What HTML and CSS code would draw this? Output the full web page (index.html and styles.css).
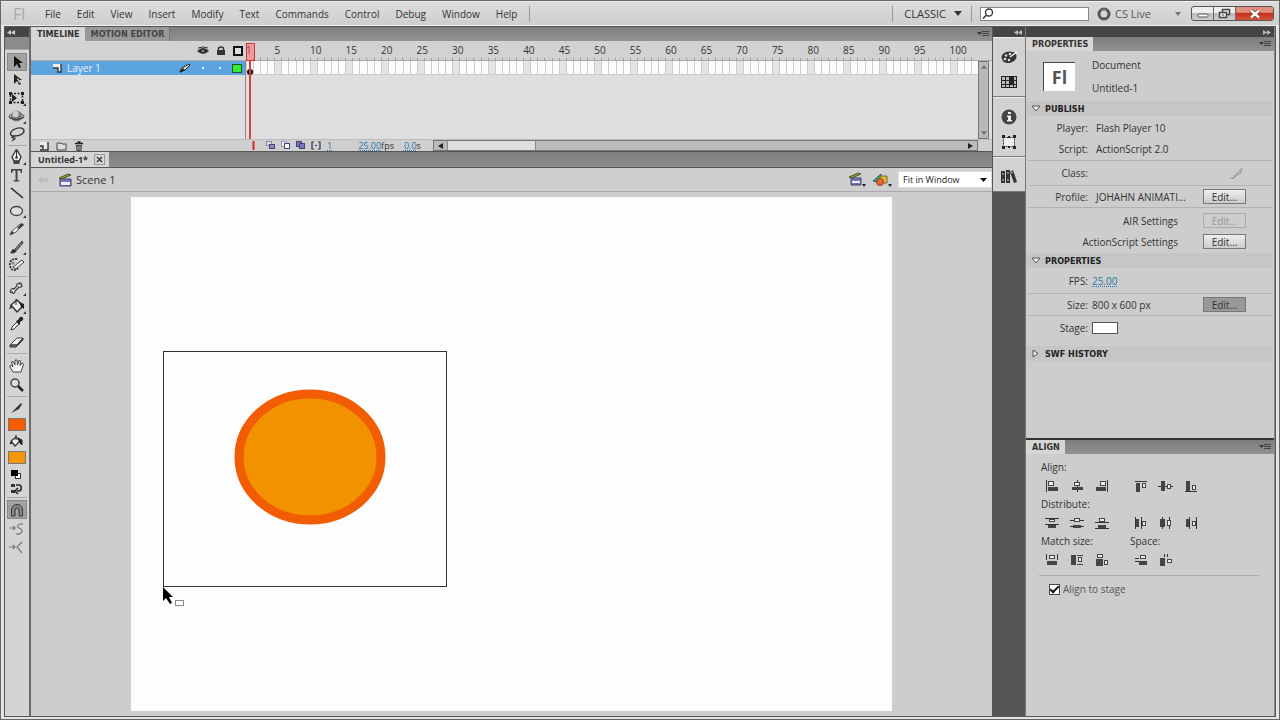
FILE: index.html
```html
<!DOCTYPE html>
<html lang="en">
<head>
<meta charset="utf-8">
<title>Untitled-1</title>
<link rel="stylesheet" href="styles.css">
</head>
<body>
<div class="window">
  <header class="menubar">
    <span class="logo">Fl</span>
    <nav class="menus">
      <button>File</button><button>Edit</button><button>View</button><button>Insert</button><button>Modify</button><button>Text</button><button>Commands</button><button>Control</button><button>Debug</button><button>Window</button><button>Help</button>
    </nav>
    <i class="bar-line"></i>
    <span class="grow"></span>
    <i class="bar-line"></i>
    <button class="workspace">CLASSIC <svg width="8" height="5"><path d="M0 0h8L4 5z" fill="#333"/></svg></button>
    <i class="bar-line"></i>
    <label class="search"><svg width="12" height="12"><circle cx="7" cy="4.500" r="3.500" fill="none" stroke="#333" stroke-width="1.300"/><path d="M4.500 7L1 10.500" stroke="#333" stroke-width="1.600"/></svg><input type="text" aria-label="Search"></label>
    <button class="live"><svg width="14" height="14"><circle cx="7" cy="7" r="5" fill="none" stroke="#555" stroke-width="3"/><path d="M4 4a4 4 0 0 1 5-1" fill="none" stroke="#999"/></svg> CS Live <svg class="live-arrow" width="6" height="4"><path d="M0 0h6L3 4z" fill="#777"/></svg></button>
    <div class="winbuttons">
      <button aria-label="Minimize"><svg width="12" height="10"><rect x="1" y="5" width="10" height="3" rx="1" fill="#fff" stroke="#555"/></svg></button>
      <button aria-label="Restore"><svg width="13" height="12"><rect x="4.500" y="1.500" width="7" height="5" fill="#eee" stroke="#444" stroke-width="1.500"/><rect x="1.500" y="4.500" width="7" height="5" fill="#eee" stroke="#444" stroke-width="1.500"/><path d="M4 7h2" stroke="#444"/></svg></button>
      <button class="close" aria-label="Close"><svg width="12" height="10"><path d="M2 1.500l8 7M10 1.500l-8 7" stroke="#733" stroke-width="4"/><path d="M2 1.500l8 7M10 1.500l-8 7" stroke="#fff" stroke-width="2.400"/></svg></button>
    </div>
  </header>

  <div class="workarea">
    <aside class="tools">
      <div class="dockhead left"><svg width="8" height="5"><path d="M4 0v5L0 2.500zM8 0v5L4 2.500z" fill="#ccc"/></svg></div>
      <div class="toolgrip"></div>
      <div class="toolset">
        <button class="on" aria-label="Selection"><svg width="18" height="16"><path d="M6 2v11l3-3 2 4 2-1-2-4h4z" fill="#111"/></svg></button>
        <button aria-label="Subselection"><svg width="18" height="16"><path d="M6 2v10l3-3 2 4 2-1-2-4h3z" fill="#222"/><path d="M9 7l1 0 1.500 4" stroke="#eee" fill="none"/></svg></button>
        <button aria-label="Free Transform"><svg width="18" height="16"><rect x="2.500" y="3.500" width="12" height="9" fill="none" stroke="#222" stroke-width="1.500" stroke-dasharray="2 1.500"/><path d="M1 2h3v3H1zM13 2h3v3h-3zM1 11h3v3H1zM13 11h3v3h-3zM4 4v8l5-4z" fill="#222"/><path d="M18 13v3h-3z" fill="#333"/></svg></button>
        <button aria-label="3D Rotation"><svg width="18" height="16"><ellipse cx="8.500" cy="8.500" rx="7.500" ry="3" fill="#ccc" stroke="#444"/><circle cx="8.500" cy="8" r="5.500" fill="#777"/><circle cx="7.500" cy="6" r="3.200" fill="#ccc"/><path d="M1 9q7.500 5 15 0" fill="none" stroke="#333"/><path d="M18 13v3h-3z" fill="#333"/></svg></button>
        <button aria-label="Lasso"><svg width="18" height="16"><path d="M5 10C1 9 2 5 7 3s9-1 9 2-5 5-9 5-4 2-1 2-1 2-2 3" fill="none" stroke="#333" stroke-width="1.300"/></svg></button>
        <hr>
        <button aria-label="Pen"><svg width="18" height="16"><path d="M8 1l-4 7 2 4h5l2-4-4-7z" fill="#eee" stroke="#333" stroke-width="1.300"/><path d="M8.500 2v6" stroke="#333"/><circle cx="8.500" cy="8.500" r="1.300" fill="#333"/><path d="M5.500 12h6v3h-6z" fill="#444"/><path d="M18 13v3h-3z" fill="#333"/></svg></button>
        <button aria-label="Text"><svg width="18" height="16"><path d="M3 2h11v4h-1l-1-2.500H9.500V13l2 .500v1h-6v-1l2-.500V3.500H5L4 6H3z" fill="#444"/></svg></button>
        <button aria-label="Line"><svg width="18" height="16"><path d="M3 3l12 10" stroke="#222" stroke-width="1.500"/></svg></button>
        <button aria-label="Oval"><svg width="18" height="16"><ellipse cx="8.500" cy="8" rx="6" ry="4.500" fill="#ddd" stroke="#444" stroke-width="1.300"/><path d="M18 12v3h-3z" fill="#333"/></svg></button>
        <button aria-label="Pencil"><svg width="18" height="16"><path d="M2 14l2-4 8-7 3 1-7 7z" fill="#eee" stroke="#555"/><path d="M2 14l2-4 2 2zM9 7l5-5 2 2-6 4z" fill="#333"/></svg></button>
        <button aria-label="Brush"><svg width="18" height="16"><path d="M2 14c2-1 1-4 4-4l3 2c-2 2-4 3-7 2z" fill="#333"/><path d="M7 10l7-8 1 2-6 7z" fill="#777" stroke="#444"/><path d="M18 13v3h-3z" fill="#333"/></svg></button>
        <button aria-label="Deco"><svg width="18" height="16"><path d="M9 2C4 1 1 5 2 9s5 6 8 2" fill="none" stroke="#333" stroke-width="1.800" stroke-dasharray="2 1"/><path d="M5 10l9-7 2 2-8 7z" fill="#eee" stroke="#444"/><circle cx="5" cy="6" r="1.500" fill="#888"/></svg></button>
        <hr>
        <button aria-label="Bone"><svg width="18" height="16"><path d="M3 10c-2 2 0 3 1 2 0 2 3 2 3-1l4-4c3 1 4-2 2-2 1-2-1-3-2-1-1-1-3 0-2 2L6 9c-1-1-3 0-3 1z" fill="#eee" stroke="#333" stroke-width="1.200"/><path d="M18 13v3h-3z" fill="#333"/></svg></button>
        <button aria-label="Paint Bucket"><svg width="18" height="16"><path d="M3 7l6-5 6 6-6 6z" fill="#eee" stroke="#333" stroke-width="1.500"/><path d="M3 7L1 11l3-1zM11 4l5 2v5l-3-2z" fill="#222"/><path d="M8 1v6" stroke="#333"/><path d="M18 13v3h-3z" fill="#333"/></svg></button>
        <button aria-label="Eyedropper"><svg width="18" height="16"><path d="M3 14l1-3 5-5 2 2-5 5z" fill="#eee" stroke="#333"/><path d="M8 5l2-1 2-3c2-1 4 1 3 3l-3 2v3z" fill="#222"/></svg></button>
        <button aria-label="Eraser"><svg width="18" height="16"><path d="M2 11l7-7h6l-6 7z" fill="#eee" stroke="#444"/><path d="M2 11v2h6l7-7V4l-6 7z" fill="#777" stroke="#333"/></svg></button>
        <hr>
        <div class="tall">
        <button aria-label="Hand"><svg width="18" height="16"><path d="M5 14L1.500 8l2-.500L5 9 3.500 4l1.500-.500L7 7V2h2l.500 5L11 2.500l1.500.500-.500 4.500L14 5l1.500 1L13 14z" fill="#f4f4f4" stroke="#444"/></svg></button>
        <button aria-label="Zoom"><svg width="18" height="16"><circle cx="7" cy="6" r="4" fill="#ddd" stroke="#444" stroke-width="1.500"/><path d="M10 9l5 5" stroke="#222" stroke-width="2.500"/></svg></button>
        </div>
        <hr>
        <button aria-label="Stroke color tool"><svg width="18" height="16"><path d="M3 13l6-6 2 2zM9 7l4-4 1 1-3 5z" fill="#333"/></svg></button>
        <button class="swatch stroke" aria-label="Stroke color"></button>
        <button aria-label="Fill color tool"><svg width="18" height="16"><path d="M3 8l5-4 4 4-5 5z" fill="#eee" stroke="#333" stroke-width="1.300"/><path d="M8 2v5M10 5l4 2v5l-3-3M3 9L2 11l2-1z" fill="#222" stroke="#222"/></svg></button>
        <button class="swatch fill" aria-label="Fill color"></button>
        <div class="short">
        <button aria-label="Black and white"><svg width="18" height="13"><rect x="7.500" y="5.500" width="5" height="5" fill="#fff" stroke="#333"/><path d="M3 2h7v6H3z" fill="#000"/></svg></button>
        <button aria-label="Swap colors"><svg width="18" height="13"><path d="M3 2h4v3H3zM3 8h4v3H3z" fill="#333"/><path d="M8 3h3c3 0 3 6 0 6H9M10 6L7 9l3 3" fill="none" stroke="#222" stroke-width="1.500"/></svg></button>
        </div>
        <hr>
        <div class="tall">
        <button class="on" aria-label="Snap to Objects"><svg width="18" height="16"><path d="M3.500 14V8a5.500 5.500 0 0 1 11 0v6h-3.500V8a2 2 0 0 0-4 0v6z" fill="#888" stroke="#333"/></svg></button>
        <button aria-label="Smooth"><svg width="18" height="16"><path d="M1 7h6M5 5l2 2-2 2M15 3c-5-1-7 3-4 4s4 3 2 5-4 1-5 1" fill="none" stroke="#777" stroke-width="1.200"/></svg></button>
        <button aria-label="Straighten"><svg width="18" height="16"><path d="M1 7h6M5 5l2 2-2 2M14 2l-5 5 5 6" fill="none" stroke="#777" stroke-width="1.200"/></svg></button>
        </div>
      </div>
    </aside>

    <main class="center">
      <section class="timeline">
        <div class="tabs">
          <button class="tab active">TIMELINE</button><button class="tab dim">MOTION EDITOR</button>
          <span class="grow"></span>
          <button class="panelmenu" aria-label="Timeline menu"><svg width="13" height="8"><path d="M0 2h5L2.500 5z" fill="#333"/><path d="M5 1.500h7M5 3.500h7M5 5.500h7" stroke="#444"/></svg></button>
        </div>
        <div class="tlhead">
          <div class="layercols">
            <svg width="12" height="10"><path d="M0 5q6-6 12 0-6 6-12 0z" fill="#333"/><path d="M1 2q5-2 10 0" stroke="#333" fill="none"/><circle cx="6" cy="5" r="1" fill="#aaa"/></svg>
            <svg width="10" height="10"><path d="M1 4h8v5H1z" fill="#333"/><path d="M2.500 5V3a2.500 2 0 0 1 5 0v2" fill="none" stroke="#333" stroke-width="1.500"/></svg>
            <svg width="10" height="10"><rect x="1" y="1" width="8" height="8" fill="#ddd" stroke="#111" stroke-width="2"/></svg>
          </div>
          <div class="ruler framegrid">
            <span>1</span><span>5</span><span>10</span><span>15</span><span>20</span><span>25</span><span>30</span><span>35</span><span>40</span><span>45</span><span>50</span><span>55</span><span>60</span><span>65</span><span>70</span><span>75</span><span>80</span><span>85</span><span>90</span><span>95</span><span>100</span>
          </div>
        </div>
        <div class="tlbody">
          <div class="layers">
            <div class="layer">
              <svg width="10" height="10"><path d="M1 1h8v8H6V5H1z" fill="#eee"/><path d="M1 5h5v4M9 1v8H5" fill="none" stroke="#333" stroke-width="1.300"/></svg>
              <span class="name">Layer 1</span>
              <svg width="12" height="10"><path d="M1 9l2-4 7-4 1 1-5 5z" fill="#ddd" stroke="#222"/><path d="M1 9l4-3" stroke="#222" stroke-width="2"/></svg>
              <i class="dot"></i><i class="dot"></i><i class="outline"></i>
            </div>
          </div>
          <div class="frames">
            <div class="strip framegrid"><i></i><i></i><i></i><i></i><i></i><i></i><i></i><i></i><i></i><i></i><i></i><i></i><i></i><i></i><i></i><i></i><i></i><i></i><i></i><i></i><i></i></div>
            <svg class="playhead" width="9" height="96"><rect x=".500" y=".500" width="8" height="17" fill="#f66" fill-opacity=".500" stroke="#c33"/><circle cx="4" cy="29" r="3" fill="#111"/><rect x="3" y="18" width="2" height="78" fill="#d84040"/></svg>
          </div>
          <div class="vscroll"><svg width="6" height="4"><path d="M0 4l3-4 3 4z" fill="#777"/></svg><svg width="6" height="4"><path d="M0 0l3 4 3-4z" fill="#777"/></svg></div>
        </div>
        <div class="tlfoot">
          <div class="layerbuttons">
            <button aria-label="New Layer"><svg width="10" height="10"><path d="M1 1h8v8H4V5H1z" fill="#eee"/><path d="M9 1v8H1M1 5h3v3" fill="none" stroke="#333" stroke-width="1.400"/></svg></button>
            <button aria-label="New Folder"><svg width="11" height="10"><path d="M1 2h4l1 1h4v6H1z" fill="#ddd" stroke="#444"/></svg></button>
            <button aria-label="Delete"><svg width="10" height="10"><path d="M1 2.500h8M3.500 1h3" stroke="#222" stroke-width="1.500"/><path d="M2 4h6l-.500 6h-5z" fill="#444"/><path d="M4 5v4M6 5v4" stroke="#bbb"/></svg></button>
          </div>
          <div class="onion">
            <button aria-label="Center Frame"><svg width="3" height="9"><path d="M1.500 0v9" stroke="#d22" stroke-width="2"/></svg></button>
            <button aria-label="Onion Skin"><svg width="10" height="9"><rect x=".500" y=".500" width="5" height="4" fill="#ddd" stroke="#88a"/><rect x="3.500" y="3.500" width="5" height="4" fill="#88b" stroke="#447"/></svg></button>
            <button aria-label="Onion Skin Outlines"><svg width="10" height="9"><rect x=".500" y=".500" width="5" height="5" fill="#eee" stroke="#99a"/><rect x="3.500" y="2.500" width="5" height="5" fill="#fff" stroke="#447"/></svg></button>
            <button aria-label="Edit Multiple Frames"><svg width="10" height="9"><rect x=".500" y=".500" width="5" height="5" fill="#77b" stroke="#447"/><rect x="3.500" y="2.500" width="5" height="5" fill="#77b" stroke="#447"/></svg></button>
            <button aria-label="Modify Markers"><svg width="10" height="9"><path d="M3 1H1v7h2M7 1h2v7H7M4 4.500h2" fill="none" stroke="#335" stroke-width="1.200"/></svg></button>
          </div>
          <a class="hot curframe" href="#">1</a>
          <span class="fps"><a class="hot" href="#">25.00</a>fps</span>
          <span class="secs"><a class="hot" href="#">0.0</a>s</span>
          <div class="hscroll"><svg width="5" height="6"><path d="M5 0v6L0 3z" fill="#222"/></svg><i class="thumb"></i><svg width="5" height="6"><path d="M0 0v6l5-3z" fill="#222"/></svg></div>
        </div>
      </section>

      <div class="doctabs"><div class="doctab">Untitled-1* <button aria-label="Close document"><svg width="9" height="9"><path d="M2 2l5 5M7 2L2 7" stroke="#333" stroke-width="1.300"/></svg></button></div></div>

      <div class="editbar">
        <svg width="10" height="8"><path d="M4 0v2.500h6v3H4V8L0 4z" fill="#bbb"/></svg>
        <svg class="clap" width="16" height="14"><path d="M2 6h11v7H2z" fill="#77b" stroke="#446"/><path d="M3 9h9v3H3z" fill="#eef"/><path d="M1 5l9-4 3 1-9 4z" fill="#992" stroke="#553"/></svg>
        <span class="scene">Scene 1</span>
        <span class="grow"></span>
        <button aria-label="Edit Scene"><svg width="18" height="15"><path d="M3 6h10v7H3z" fill="#77b" stroke="#446"/><path d="M4 9h8v2H4z" fill="#eef"/><path d="M1 5l9-4 3 1-9 4z" fill="#992" stroke="#553"/><path d="M14 12h4l-2 3z" fill="#222"/></svg></button>
        <button aria-label="Edit Symbols"><svg width="20" height="15"><path d="M1 9l8-7v9z" fill="#2a8" stroke="#265"/><path d="M8 4h7v7H8z" fill="#db2" stroke="#763"/><circle cx="8" cy="10" r="3.500" fill="#e63" stroke="#933"/><path d="M16 12h4l-2 3z" fill="#222"/></svg></button>
        <div class="zoom"><select aria-label="Zoom level"><option>Fit in Window</option></select><svg width="7" height="4"><path d="M0 0h7L3.500 4z" fill="#111"/></svg></div>
      </div>

      <div class="pasteboard">
        <div class="stage">
          <svg class="oval" width="152" height="136" viewBox="0 0 152 136"><ellipse cx="76" cy="68" rx="71" ry="63" fill="#f29200" stroke="#f25c02" stroke-width="9"/></svg>
          <div class="marquee"></div>
          <svg class="pointer" width="22" height="21"><path d="M0 0v14l3-3 4 6 2-1-3-6h4z" fill="#000"/><rect x="12.500" y="13.500" width="8" height="5" fill="#fff" stroke="#888"/></svg>
        </div>
      </div>
    </main>

    <aside class="icondock">
      <div class="dockhead"><svg width="8" height="5"><path d="M4 0v5L0 2.500zM8 0v5L4 2.500z" fill="#bbb"/></svg></div>
      <div class="icongroup">
        <button aria-label="Color"><svg width="18" height="16"><path d="M2 10C0 5 7 1 13 3c4 1 5 6 1 9-4 3-11 3-12-2z" fill="#333"/><circle cx="6" cy="6.500" r="1.300" fill="#ddd"/><circle cx="10" cy="5" r="1.300" fill="#ddd"/><circle cx="5" cy="10" r="1.300" fill="#ddd"/><circle cx="9" cy="11" r="1.300" fill="#ddd"/><path d="M10 8l7-5" stroke="#eee" stroke-width="1.500"/></svg></button>
        <button aria-label="Swatches"><svg width="18" height="16"><path d="M1 2h16v12H1z" fill="#222"/><path d="M2 3h3v3H2zM6 3h3v3H6zM2 7h3v3H2zM6 7h3v3H6zM14 3h2v3h-2zM2 11h3v2H2zM6 11h3v2H6zM10 11h3v2h-3zM14 11h2v2h-2zM14 7h2v3h-2z" fill="#bbb"/></svg></button>
      </div>
      <div class="icongroup">
        <button aria-label="Info"><svg width="18" height="16"><circle cx="9" cy="8" r="7.500" fill="#444"/><path d="M8 3h3v2H8zM7 6.500h4V11h1v1.500H7V11h1V8H7z" fill="#eee"/></svg></button>
        <button aria-label="Transform"><svg width="18" height="16"><rect x="3.500" y="3.500" width="11" height="9" fill="#eee" stroke="#333" stroke-dasharray="2 1"/><path d="M2 1h3v3H2zM13 1h3v3h-3zM2 12h3v3H2zM13 12h3v3h-3zM8 2h2v2H8zM8 12h2v2H8z" fill="#222"/></svg></button>
      </div>
      <div class="icongroup">
        <button aria-label="Library"><svg width="18" height="16"><path d="M1 2h4v12H1zM6 1h4v13H6z" fill="#333"/><path d="M10 3l3-2 4 12-3 1z" fill="#333"/><path d="M2 5h2M7 4h2M2 11h2M7 11h2M11 4l2-1" stroke="#ccc"/></svg></button>
      </div>
    </aside>

    <aside class="panels">
      <div class="dockhead right"><svg width="8" height="5"><path d="M0 0v5l4-2.500zM4 0v5l4-2.500z" fill="#bbb"/></svg></div>
      <section class="panel props">
        <div class="tabs"><button class="tab active">PROPERTIES</button><span class="grow"></span><button class="panelmenu" aria-label="Properties menu"><svg width="13" height="8"><path d="M0 2h5L2.500 5z" fill="#333"/><path d="M5 1.500h7M5 3.500h7M5 5.500h7" stroke="#444"/></svg></button></div>
        <div class="docinfo"><span class="doclogo">Fl</span><div><p>Document</p><p>Untitled-1</p></div></div>
        <h2><svg width="10" height="7"><path d="M1 1h8L5 6z" fill="#eee" stroke="#555"/></svg>PUBLISH</h2>
        <div class="block">
          <div class="row"><span class="key">Player:</span><span class="val">Flash Player 10</span></div>
          <div class="row"><span class="key">Script:</span><span class="val">ActionScript 2.0</span></div>
        </div>
        <div class="block lined"><div class="row"><span class="key">Class:</span><span class="grow"></span><svg class="pencil" width="16" height="14"><path d="M2 12h3l5-6 4-4-1 5-4 2-4 4" fill="#bbb" stroke="#999"/></svg></div></div>
        <div class="block flush"><div class="row"><span class="key">Profile:</span><span class="val">JOHAHN ANIMATI...</span><button class="edit">Edit...</button></div></div>
        <div class="block ruled">
          <div class="row"><span class="wide">AIR Settings</span><button class="edit" disabled>Edit...</button></div>
          <div class="row"><span class="wide">ActionScript Settings</span><button class="edit">Edit...</button></div>
        </div>
        <h2><svg width="10" height="7"><path d="M1 1h8L5 6z" fill="#eee" stroke="#555"/></svg>PROPERTIES</h2>
        <div class="block lined near first"><div class="row"><span class="key">FPS:</span><a class="hot" href="#">25.00</a></div></div>
        <div class="block near flush"><div class="row"><span class="key">Size:</span><span class="val">800 x 600 px</span><button class="edit pressed">Edit...</button></div></div>
        <div class="block lined near last"><div class="row"><span class="key">Stage:</span><button class="stagecolor" aria-label="Stage color"></button></div></div>
        <h2><svg width="10" height="9"><path d="M2 1v7l5-3.500z" fill="#eee" stroke="#555"/></svg>SWF HISTORY</h2>
      </section>
      <section class="panel align">
        <div class="tabs"><button class="tab active">ALIGN</button><span class="grow"></span><button class="panelmenu" aria-label="Align menu"><svg width="13" height="8"><path d="M0 2h5L2.500 5z" fill="#333"/><path d="M5 1.500h7M5 3.500h7M5 5.500h7" stroke="#444"/></svg></button></div>
        <div class="alignbody">
          <div class="pair"><span>Align:</span></div>
          <div class="pair icons">
            <div>
              <button aria-label="Align left"><svg width="14" height="12"><path d="M1.500 0v12" stroke="#333"/><rect x="3.500" y="1.500" width="5" height="4" fill="#eee" stroke="#444"/><path d="M3 7h10v4H3z" fill="#444"/></svg></button>
              <button aria-label="Align center"><svg width="14" height="12"><path d="M7.500 0v12" stroke="#333"/><rect x="4.500" y="2.500" width="5" height="3" fill="#eee" stroke="#444"/><path d="M2 7h11v3H2z" fill="#444"/></svg></button>
              <button aria-label="Align right"><svg width="14" height="12"><path d="M12.500 0v12" stroke="#333"/><rect x="5.500" y="1.500" width="5" height="4" fill="#eee" stroke="#444"/><path d="M1 7h10v4H1z" fill="#444"/></svg></button>
            </div>
            <div>
              <button aria-label="Align top"><svg width="14" height="12"><path d="M1 1.500h12" stroke="#333"/><path d="M2 3h4v9H2z" fill="#444"/><rect x="8.500" y="3.500" width="3" height="4" fill="#eee" stroke="#444"/></svg></button>
              <button aria-label="Align middle"><svg width="15" height="12"><path d="M0 6.500h15" stroke="#333"/><path d="M3 1h4v10H3z" fill="#444"/><rect x="9.500" y="4.500" width="3" height="4" fill="#eee" stroke="#444"/></svg></button>
              <button aria-label="Align bottom"><svg width="14" height="12"><path d="M1 11.500h12" stroke="#333"/><path d="M2 1h4v10H2z" fill="#444"/><rect x="8.500" y="5.500" width="3" height="4" fill="#eee" stroke="#444"/></svg></button>
            </div>
          </div>
          <div class="pair"><span>Distribute:</span></div>
          <div class="pair icons">
            <div>
              <button aria-label="Distribute top"><svg width="14" height="12"><path d="M0 1.500h14M0 7.500h14" stroke="#333"/><rect x="4.500" y="2.500" width="5" height="2" fill="#eee" stroke="#444"/><path d="M3 8h8v3H3z" fill="#444"/></svg></button>
              <button aria-label="Distribute vertical center"><svg width="14" height="12"><path d="M0 3.500h14M0 9.500h14" stroke="#333"/><rect x="4.500" y="1.500" width="5" height="3" fill="#eee" stroke="#444"/><path d="M3 8h8v3H3z" fill="#444"/></svg></button>
              <button aria-label="Distribute bottom"><svg width="14" height="12"><path d="M0 5.500h14M0 11.500h14" stroke="#333"/><rect x="4.500" y="1.500" width="5" height="3" fill="#eee" stroke="#444"/><path d="M3 8h8v3H3z" fill="#444"/></svg></button>
            </div>
            <div>
              <button aria-label="Distribute left"><svg width="14" height="12"><path d="M1.500 0v12M7.500 0v12" stroke="#333"/><path d="M2 2h3v8H2z" fill="#444"/><rect x="8.500" y="4.500" width="3" height="4" fill="#eee" stroke="#444"/></svg></button>
              <button aria-label="Distribute horizontal center"><svg width="14" height="12"><path d="M3.500 0v12M10.500 0v12" stroke="#333"/><path d="M1 2h5v8H1z" fill="#444"/><rect x="8.500" y="3.500" width="3" height="5" fill="#eee" stroke="#444"/></svg></button>
              <button aria-label="Distribute right"><svg width="14" height="12"><path d="M5.500 0v12M12.500 0v12" stroke="#333"/><path d="M2 2h3v8H2z" fill="#444"/><rect x="8.500" y="4.500" width="3" height="4" fill="#eee" stroke="#444"/></svg></button>
            </div>
          </div>
          <div class="pair"><span>Match size:</span><span>Space:</span></div>
          <div class="pair icons">
            <div>
              <button aria-label="Match width"><svg width="14" height="12"><path d="M1.500 0v6M12.500 0v6" stroke="#333"/><rect x="4.500" y="1.500" width="5" height="3" fill="#eee" stroke="#444"/><path d="M2 7h10v4H2z" fill="#444"/></svg></button>
              <button aria-label="Match height"><svg width="14" height="12"><path d="M1 1h5v10H1zM7 1h6v1H7zM7 10h6v1H7z" fill="#444"/><rect x="8.500" y="3.500" width="3" height="4" fill="#eee" stroke="#444"/></svg></button>
              <button aria-label="Match width and height"><svg width="14" height="12"><rect x="2.500" y=".500" width="5" height="3" fill="#eee" stroke="#444"/><path d="M1 5h7v7H1z" fill="#444"/><rect x="9.500" y="6.500" width="3" height="4" fill="#eee" stroke="#444"/></svg></button>
            </div>
            <div>
              <button aria-label="Space vertically"><svg width="14" height="12"><path d="M1 4.500h4M1 7.500h4" stroke="#333"/><rect x="6.500" y="1.500" width="5" height="3" fill="#eee" stroke="#444"/><path d="M5 7h8v4H5z" fill="#444"/></svg></button>
              <button aria-label="Space horizontally"><svg width="14" height="12"><path d="M5.500 0v3M8.500 0v3" stroke="#333"/><path d="M1 4h5v8H1z" fill="#444"/><rect x="8.500" y="5.500" width="4" height="3" fill="#eee" stroke="#444"/></svg></button>
            </div>
          </div>
          <label class="tostage"><input type="checkbox" checked>Align to stage</label>
        </div>
      </section>
    </aside>
  </div>
</div>
</body>
</html>
```
FILE: styles.css
```css
* { box-sizing: border-box; }
body { margin: 0; font: 10px/14px "Open Sans", "Noto Sans", sans-serif; color: #333; background: #555; }
button { margin: 0; padding: 0; border: 0; background: none; color: inherit; font: inherit; display: flex; align-items: center; justify-content: center; }
svg { display: block; flex: none; }
p, h2 { margin: 0; }
.grow { flex: 1; }

.window { display: flex; flex-direction: column; min-height: 100vh; background: #e4e4e4; border: 1px solid #666; padding: 0 3px 2px; }
.menubar { display: flex; align-items: center; height: 25px; margin: 0 -3px; padding-right: 5px; background: linear-gradient(#dcdcdc, #cfcfcf); border-top: 1px solid #eee; border-bottom: 1px solid #eee; }
.logo { width: 36px; padding-left: 12px; font-size: 16px; color: #aaa; }
.menus { display: flex; gap: 16px; padding: 0 12px 0 8px; }
.bar-line { width: 1px; height: 16px; background: #999; }
.workspace { gap: 8px; margin: 0 9px 0 11px; font-size: 11px; }
.search { display: flex; align-items: center; width: 109px; height: 14px; margin: 0 8px; padding-left: 1px; background: #fff; border: 1px solid #888; }
.search input { width: 90px; height: 12px; padding: 0 3px; border: 0; outline: 0; background: none; font: inherit; }
.live { gap: 4px; margin-right: 10px; font-size: 11px; color: #555; }
.live-arrow { margin-left: 20px; }
.winbuttons { display: flex; height: 15px; border: 1px solid #555; border-radius: 3px; overflow: hidden; background: linear-gradient(#eee 45%, #bbb 50%, #ccc); }
.winbuttons button { width: 22px; border-right: 1px solid #666; }
.winbuttons .close { width: 37px; border: 0; background: linear-gradient(#e0907c 40%, #c63220 50%, #d85638); }

.workarea { flex: 1; display: grid; grid-template-columns: 26px 1fr 33px 249px; border: 1px solid #555; background: #cdcdcd; }
.dockhead { height: 10px; display: flex; align-items: center; justify-content: flex-end; padding-right: 3px; background: #454545; }
.dockhead.left { justify-content: flex-start; padding-left: 2px; }

.tools { border-right: 2px solid #6a6a6a; background: #d4d4d4; }
.toolgrip { height: 13px; background: #8b8b8b; border-bottom: 1px solid #aaa; }
.toolset { padding: 3px 2px 0; }
.toolset button { width: 20px; height: 18px; }
.toolset hr { height: 1px; margin: 2px 0 2px; border: 0; background: #aaa; }
.toolset .tall button { height: 19px; }
.toolset .short { padding-top: 2px; }
.toolset .short button { height: 14px; }
.toolset button.on { background: #a2a2a2; border: 1px solid #888; }
.toolset button.swatch { width: 18px; height: 13px; margin: 1px; border: 1px solid #777; }
.toolset .stroke { background: #f55c00; }
.toolset .fill { background: #f59600; }

.center { display: flex; flex-direction: column; min-width: 0; border-right: 1px solid #555; }
.tabs { display: flex; height: 14px; background: linear-gradient(#7d7d7d, #929292); }
.tab { padding: 0 5px 0 6px; font: bold 9px/14px "DejaVu Sans Condensed", "DejaVu Sans", sans-serif; }
.tab.active { background: #d6d6d6; }
.tab.dim { border-right: 1px solid #777; background: #999; color: #444; }
.panelmenu { width: 18px; }
.tlhead { display: flex; height: 20px; background: #d2d2d2; border-bottom: 1px solid #aaa; }
.layercols { display: flex; align-items: center; justify-content: flex-end; gap: 7px; width: 215px; padding-right: 3px; }
.framegrid { display: grid; grid-template-columns: 4fr repeat(19, 5fr) 4fr; }
.ruler { flex: 1; margin-right: 14px; }
.ruler span { min-width: 0; line-height: 18px; background: repeating-linear-gradient(90deg, #999 0 1px, transparent 1px 20%) bottom / 100% 2px no-repeat; }
.ruler span:first-child, .ruler span:last-child { background-image: repeating-linear-gradient(90deg, #999 0 1px, transparent 1px 25%); }
.tlbody { display: flex; height: 78px; background: #dedede; }
.layers { width: 215px; border-right: 1px solid #888; }
.layer { display: flex; align-items: center; height: 14px; padding: 0 3px 0 21px; background: #5ba4e0; color: #eef; }
.layer .name { flex: 1; padding-left: 5px; }
.layer .dot { width: 2px; height: 2px; margin-left: 11px; background: #eef; }
.layer .dot + .dot { margin-left: 15px; }
.layer .outline { width: 10px; height: 9px; margin-left: 11px; background: #3e3; border: 1px solid #252; }
.frames { position: relative; flex: 1; }
.strip { height: 14px; border-bottom: 1px solid #ccc; }
.strip i { background: repeating-linear-gradient(90deg, #ccc 0 1px, transparent 1px 20%), linear-gradient(90deg, #e4e4e4 20%, #fcfcfc 20%); }
.strip i:first-child { background: repeating-linear-gradient(90deg, #ccc 0 1px, #fcfcfc 1px 25%); }
.strip i:last-child { background: repeating-linear-gradient(90deg, #ccc 0 1px, transparent 1px 25%), linear-gradient(90deg, #e4e4e4 25%, #fcfcfc 25%); }
.playhead { position: absolute; left: 0; top: -18px; }
.vscroll { display: flex; flex-direction: column; align-items: center; justify-content: space-between; width: 11px; margin-right: 3px; padding: 3px 0; background: #b8b8b8; border: 1px solid #777; }
.tlfoot { display: flex; align-items: center; height: 12px; background: #cfcfcf; border-top: 1px solid #bbb; font-size: 9px; line-height: 11px; }
.layerbuttons { display: flex; gap: 7px; width: 215px; padding-left: 8px; }
.onion { display: flex; align-items: center; gap: 5px; padding-left: 6px; }
.onion button:first-child { margin-right: 6px; }
.hot { color: #2877ac; text-decoration: underline dotted; }
.curframe { padding-left: 6px; }
.fps { padding-left: 26px; }
.secs { padding-left: 10px; }
.hscroll { display: flex; align-items: center; flex: 1; height: 11px; margin: 0 14px 0 12px; padding: 0 4px; background: #bbb; border: 1px solid #777; }
.thumb { width: 89px; height: 9px; margin: 0 auto 0 4px; background: #dedede; border: solid #888; border-width: 0 1px; }

.doctabs { height: 17px; border-top: 1px solid #555; border-bottom: 1px solid #555; background: linear-gradient(#7d7d7d, #8d8d8d); display: flex; }
.doctab { display: flex; align-items: center; gap: 6px; padding: 0 4px 0 7px; background: #d6d6d6; font-size: 9px; font-weight: bold; }
.doctab button { border: 1px solid #999; }
.editbar { display: flex; align-items: center; height: 24px; padding-left: 7px; border-bottom: 1px solid #aaa; background: #cfcfcf; }
.clap { margin: 0 2px 0 10px; }
.scene { font-size: 11px; }
.editbar button { margin-right: 6px; }
.zoom { position: relative; width: 94px; height: 17px; background: #fff; border: 1px solid #ddd; }
.zoom select { width: 100%; height: 100%; padding: 0 14px 0 4px; border: 0; background: none; appearance: none; font: inherit; font-size: 9px; color: #222; }
.zoom svg { position: absolute; right: 4px; top: 6px; pointer-events: none; }
.pasteboard { flex: 1; display: flex; padding: 5px 100px; background: #cdcdcd; }
.stage { position: relative; flex: 1; background: #fdfdfd; }
.oval { position: absolute; left: 103px; top: 192px; }
.marquee { position: absolute; left: 32px; top: 154px; width: 284px; height: 236px; border: 1px solid #333; }
.pointer { position: absolute; left: 32px; top: 390px; }

.icondock { background: #555; border-right: 1px solid #777; }
.icongroup { display: flex; flex-direction: column; align-items: center; padding: 7px 0 2px; background: #d2d2d2; border-bottom: 1px solid #777; box-shadow: inset 0 1px #eee; }
.icongroup button { height: 25px; }

.panels { display: flex; flex-direction: column; min-width: 0; border-right: 1px solid #888; }
.props { min-height: 403px; border-bottom: 2px solid #333; }
.docinfo { display: flex; gap: 17px; height: 50px; padding: 11px 0 0 17px; }
.doclogo { width: 32px; height: 29px; background: #fff; border: solid #444; border-width: 1px 0 0 1px; font: bold 18px/28px "Open Sans", sans-serif; text-align: center; color: #555; }
.docinfo p { height: 23px; line-height: 7px; }
.panel h2 { display: flex; align-items: center; gap: 4px; height: 15px; margin-right: 2px; padding-left: 5px; background: #c6c6c6; font: bold 9px/14px "DejaVu Sans Condensed", "DejaVu Sans", sans-serif; color: #222; }
.block { margin: 0 2px; padding: 1px 0; }
.lined { border-top: 1px solid #b2b2b2; border-bottom: 1px solid #b2b2b2; }
.ruled { border-top: 1px solid #b2b2b2; padding-top: 2px; }
.flush { padding: 0; }
.first { border-top-color: transparent; }
.row { display: flex; align-items: center; height: 21px; }
.lined .row { height: 22px; }
.key { width: 60px; margin-right: 8px; text-align: right; }
.near .key { margin-right: 4px; }
.val, .wide { flex: 1; }
.wide { padding-right: 25px; text-align: right; }
.edit { width: 43px; height: 15px; margin-right: 26px; background: linear-gradient(#eee, #ccc); border: 1px solid #777; }
.edit:disabled { background: none; border-color: #aaa; color: #999; }
.edit.pressed { background: #999; }
.pencil { margin-right: 28px; }
.stagecolor { width: 26px; height: 12px; background: #fff; border: 1px solid #555; }
.last { margin-bottom: 6px; border-bottom: 0; }
.alignbody { padding: 6px 15px 0 13px; }
.pair { display: grid; grid-template-columns: 89px 1fr; padding-left: 2px; line-height: 15px; }
.icons { padding-left: 0; }
.icons > div { display: flex; }
.icons button { width: 25px; height: 22px; }
.tostage { display: flex; align-items: center; gap: 3px; margin-top: 4px; padding: 6px 0 0 10px; border-top: 1px solid #aaa; color: #555; }
.tostage input { appearance: none; width: 11px; height: 11px; margin: 0; border: 1px solid #444; background: #fff; display: grid; place-items: center; }
.tostage input:checked::before { content: ""; width: 7px; height: 3px; margin-top: -2px; border: solid #111; border-width: 0 0 2px 2px; transform: rotate(-45deg); }
```
